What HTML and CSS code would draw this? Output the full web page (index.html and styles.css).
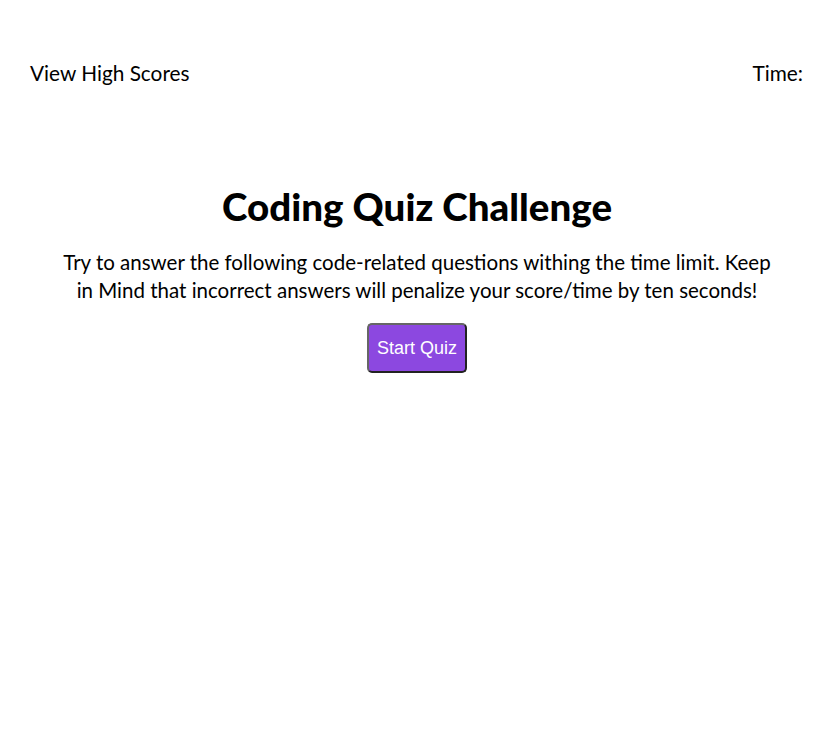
FILE: index.html
```html
<!DOCTYPE html>
<html lang="en">
<head>
<meta charset="utf-8">
<title>Coding Quiz</title>
<link rel="stylesheet" href="styles.css">
</head>
<body>
<header class="top-bar">
  <a class="high-scores" href="#">View High Scores</a>
  <div class="timer">Time: <span class="time-value"></span></div>
</header>
<main class="intro">
  <h1 class="title">Coding Quiz Challenge</h1>
  <p class="lead">Try to answer the following code-related questions withing the time limit. Keep in Mind that incorrect answers will penalize your score/time by ten seconds!</p>
  <button class="start-btn" type="button">Start Quiz</button>
</main>
</body>
</html>
```
FILE: styles.css
```css
* { box-sizing: border-box; }
html, body { margin: 0; padding: 0; background: #fff; }
body {
  font-family: Futura, "Century Gothic", Lato, "Noto Sans", sans-serif;
  color: #000;
  width: 834px;
  height: 736px;
}
.top-bar {
  display: flex;
  justify-content: space-between;
  align-items: center;
  padding: 59px 31px 0 30px;
  font-size: 20.8px;
  line-height: 28px;
}
.high-scores { color: #000; text-decoration: none; }
.intro {
  display: flex;
  flex-direction: column;
  align-items: center;
  padding: 0 55px;
  margin-top: 97px;
  text-align: center;
}
.title {
  margin: 0;
  font-size: 38.5px;
  font-weight: 900;
  line-height: 44px;
}
.lead {
  margin: 20px 0 0;
  font-size: 20.5px;
  line-height: 28px;
}
.start-btn {
  margin-top: 19px;
  width: 100px;
  height: 50px;
  background: #8c48e0;
  color: #fff;
  font-family: "Liberation Sans", Arial, sans-serif;
  font-size: 18px;
  border: 2px solid #444;
  border-color: #666 #222 #222 #666;
  border-radius: 5px;
  padding: 0;
}
```
